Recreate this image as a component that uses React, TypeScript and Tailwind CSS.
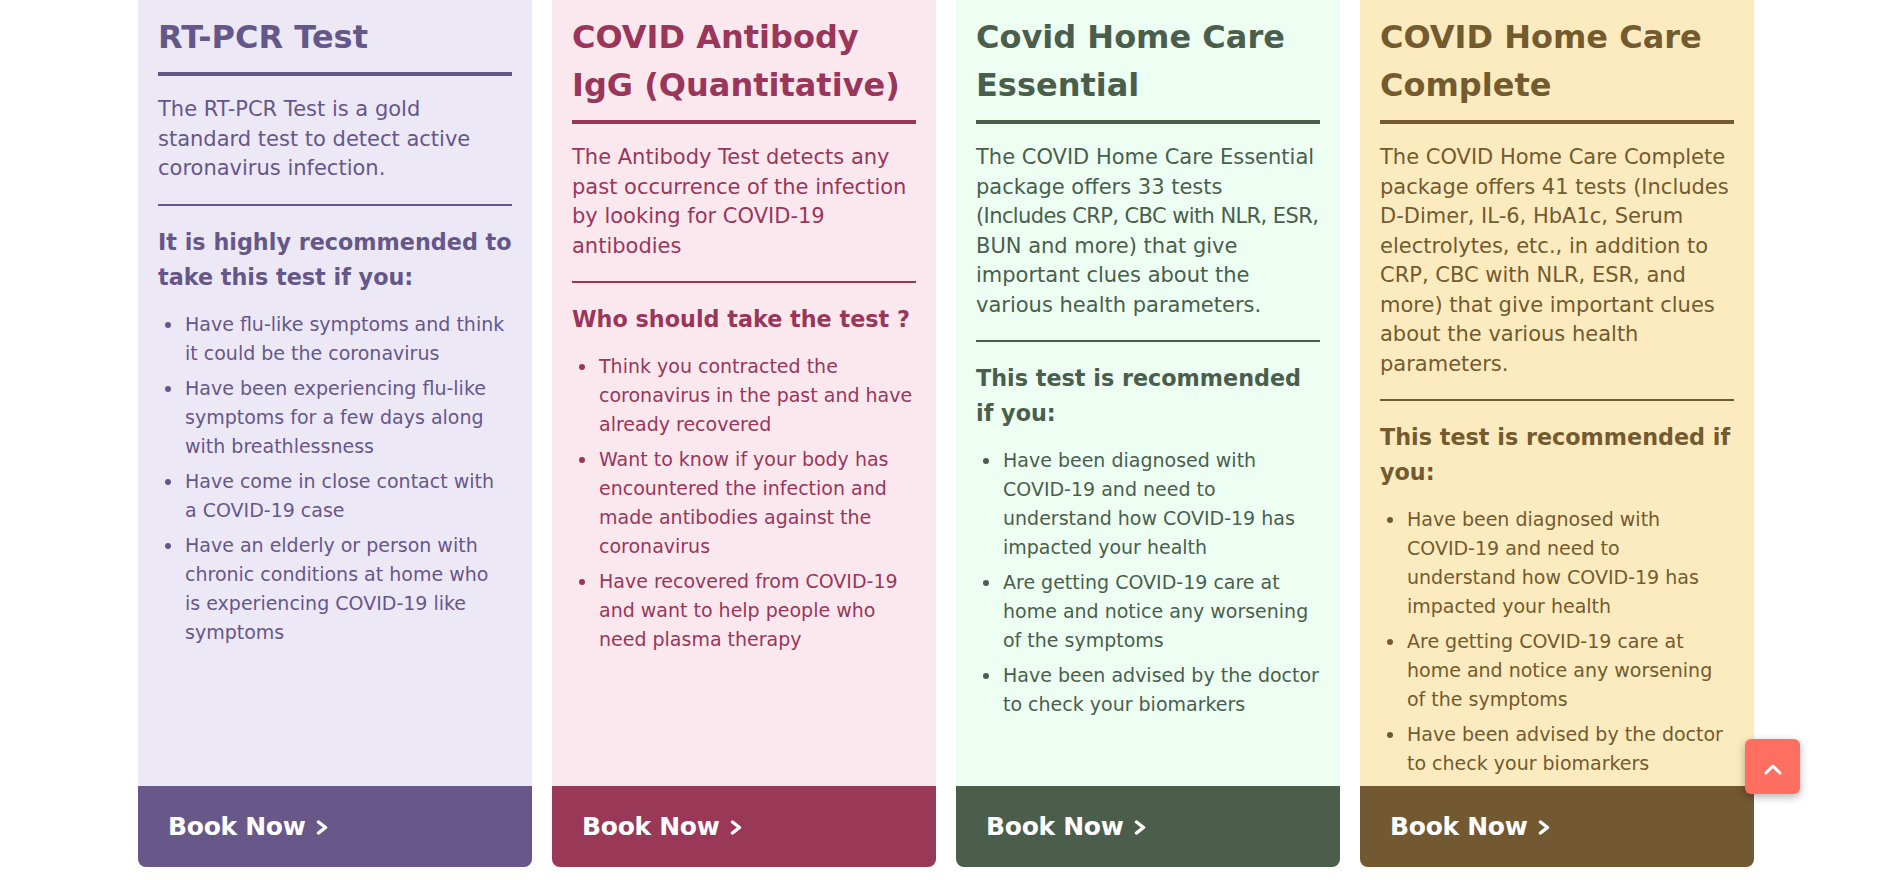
import React from "react";

type Card = {
  title: string;
  intro: React.ReactNode;
  heading: string;
  items: string[];
  bg: string;
  text: string;
  rule: string;
  footer: string;
};

// line breaks follow the original layout
const homeCareItems = [
  "Have been diagnosed with\nCOVID-19 and need to\nunderstand how COVID-19 has\nimpacted your health",
  "Are getting COVID-19 care at\nhome and notice any worsening\nof the symptoms",
  "Have been advised by the doctor\nto check your biomarkers",
];

const cards: Card[] = [
  {
    title: "RT-PCR Test",
    intro: "The RT-PCR Test is a gold\nstandard test to detect active\ncoronavirus infection.",
    heading: "It is highly recommended to\ntake this test if you:",
    items: [
      "Have flu-like symptoms and think\nit could be the coronavirus",
      "Have been experiencing flu-like\nsymptoms for a few days along\nwith breathlessness",
      "Have come in close contact with\na COVID-19 case",
      "Have an elderly or person with\nchronic conditions at home who\nis experiencing COVID-19 like\nsymptoms",
    ],
    bg: "bg-[#ede8f6]",
    text: "text-[#66578a]",
    rule: "bg-[#66578a]",
    footer: "bg-[#685889]",
  },
  {
    title: "COVID Antibody\nIgG (Quantitative)",
    intro: "The Antibody Test detects any\npast occurrence of the infection\nby looking for COVID-19\nantibodies",
    heading: "Who should take the test ?",
    items: [
      "Think you contracted the\ncoronavirus in the past and have\nalready recovered",
      "Want to know if your body has\nencountered the infection and\nmade antibodies against the\ncoronavirus",
      "Have recovered from COVID-19\nand want to help people who\nneed plasma therapy",
    ],
    bg: "bg-[#fbe8ef]",
    text: "text-[#993659]",
    rule: "bg-[#993659]",
    footer: "bg-[#9a3858]",
  },
  {
    title: "Covid Home Care\nEssential",
    intro: (
      <>
        {"The COVID Home Care Essential\npackage offers 33 tests\n"}
        <span className="tracking-[-0.6px]">(Includes CRP, CBC with NLR, ESR,</span>
        {"\nBUN and more) that give\nimportant clues about the\nvarious health parameters."}
      </>
    ),
    heading: "This test is recommended\nif you:",
    items: homeCareItems,
    bg: "bg-[#edfef3]",
    text: "text-[#4a5e4b]",
    rule: "bg-[#4a5e4b]",
    footer: "bg-[#4b5e4b]",
  },
  {
    title: "COVID Home Care\nComplete",
    intro:
      "The COVID Home Care Complete\npackage offers 41 tests (Includes\nD-Dimer, IL-6, HbA1c, Serum\nelectrolytes, etc., in addition to\nCRP, CBC with NLR, ESR, and\nmore) that give important clues\nabout the various health\nparameters.",
    heading: "This test is recommended if\nyou:",
    items: homeCareItems,
    bg: "bg-[#fcebbe]",
    text: "text-[#735a2f]",
    rule: "bg-[#735a2f]",
    footer: "bg-[#735931]",
  },
];

function TestCard({ card }: { card: Card }) {
  return (
    <div className={`flex flex-col h-[867px] rounded-b-lg overflow-hidden whitespace-pre-line ${card.bg} ${card.text}`}>
      <div className="flex-1 px-5 pt-[13px]">
        <h2 className="text-[32px] leading-[48px] font-bold">{card.title}</h2>
        <div className={`mt-[11px] h-[4px] ${card.rule}`} />
        <p className="mt-[19px] text-[21px] leading-[29.5px]">{card.intro}</p>
        <div className={`mt-[20px] h-[2px] ${card.rule}`} />
        <h3 className="mt-[19px] text-[22.3px] leading-[35px] font-bold">{card.heading}</h3>
        <ul className="mt-[15px] flex flex-col gap-[6px] text-[19px] leading-[29px]">
          {card.items.map((item) => (
            <li key={item} className="flex">
              <span className="ml-[7px] mt-[12px] w-[6px] h-[6px] rounded-full bg-current shrink-0" />
              <span className="ml-[14px]">{item}</span>
            </li>
          ))}
        </ul>
      </div>
      <a href="#" className={`h-[81px] flex items-center pl-[30px] text-white ${card.footer}`}>
        <span className="text-[25px] leading-[30px] font-bold tracking-[-0.3px]">Book Now</span>
        <svg width="12" height="15" viewBox="0 0 12 15" className="ml-[10px] mt-[1px]">
          <polyline points="2.5,2 9.5,7.5 2.5,13" fill="none" stroke="white" strokeWidth="3.4" strokeLinecap="round" strokeLinejoin="round" />
        </svg>
      </a>
    </div>
  );
}

export default function App() {
  return (
    <div className="min-h-[880px] bg-white font-['DejaVu_Sans',sans-serif]">
      <div className="grid grid-cols-[394px_384px_384px_394px] gap-x-5 justify-center">
        {cards.map((card) => (
          <TestCard key={card.heading + card.footer} card={card} />
        ))}
      </div>
      <button className="fixed right-[92px] bottom-[86px] w-[55px] h-[55px] rounded-md bg-[#ff6f61] shadow-[0_3px_8px_rgba(0,0,0,0.3)] flex items-center justify-center">
        <svg width="20" height="12" viewBox="0 0 20 12" className="mt-[5px]">
          <polyline points="3,10 10,3 17,10" fill="none" stroke="white" strokeWidth="3" strokeLinecap="round" strokeLinejoin="round" />
        </svg>
      </button>
    </div>
  );
}
